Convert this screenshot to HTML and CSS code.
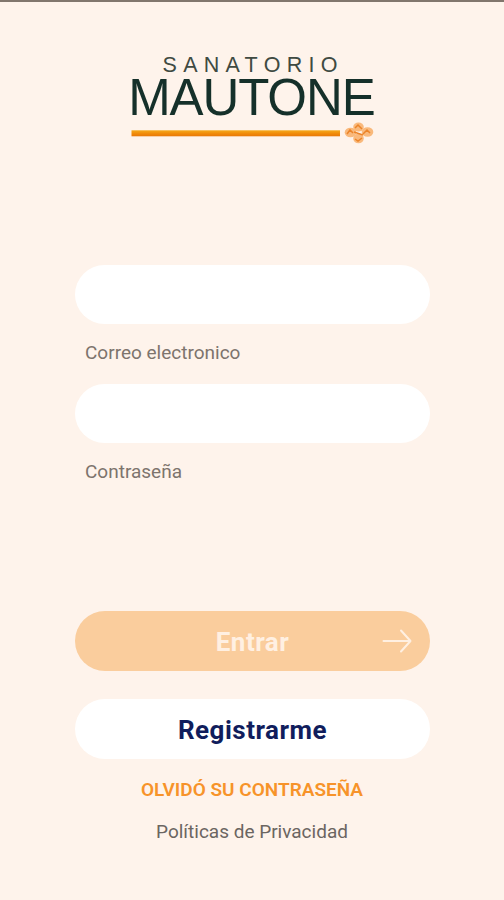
FILE: index.html
```html
<!DOCTYPE html>
<html lang="es">
<head>
    <meta charset="UTF-8">
    <title>Sanatorio Mautone</title>
    <link rel="stylesheet" href="styles.css">
</head>
<body>
    <header>
        <svg class="logo" width="250" height="96" viewBox="128 52 250 96">
            <defs>
                <linearGradient id="bar" x1="0" y1="0" x2="0" y2="1">
                    <stop offset="0" stop-color="#f5a91c"/>
                    <stop offset="0.55" stop-color="#f08a0a"/>
                    <stop offset="1" stop-color="#e87808"/>
                </linearGradient>
            </defs>
            <text class="logo-small" x="162.5" y="71.6" textLength="175" lengthAdjust="spacing">SANATORIO</text>
            <text class="logo-big" x="128.2" y="115" textLength="247.5" lengthAdjust="spacing">MAUTONE</text>
            <rect x="131.5" y="130.3" width="208.5" height="6" fill="url(#bar)"/>
            <g class="flower">
                <ellipse cx="350.5" cy="132.5" rx="5.8" ry="4.8"/>
                <ellipse cx="367.5" cy="132" rx="5.8" ry="4.8"/>
                <ellipse cx="358.5" cy="127" rx="5.3" ry="4.5"/>
                <ellipse cx="358.5" cy="138.5" rx="5.3" ry="4.8"/>
            </g>
            <g class="flower-lines">
                <path d="M347 134l3-4 3 3M363 134l4-4 3 3"/>
                <path d="M355 128l3-3 4 4M355 139l3 2 4-3M354 132l9 3"/>
            </g>
        </svg>
    </header>

    <form class="login">
        <div class="field">
            <input type="text" id="email">
            <label for="email">Correo electronico</label>
        </div>
        <div class="field">
            <input type="password" id="password">
            <label for="password">Contraseña</label>
        </div>

        <button type="button" class="btn btn-enter">
            <span>Entrar</span>
            <svg class="arrow" width="32" height="26" viewBox="0 0 32 26">
                <path d="M2.5 13h27M20 2.5L29.5 13 20 23.5"/>
            </svg>
        </button>
        <button type="button" class="btn btn-register"><span>Registrarme</span></button>
    </form>

    <nav class="links">
        <a href="#" class="forgot">OLVIDÓ SU CONTRASEÑA</a>
        <a href="#" class="privacy">Políticas de Privacidad</a>
    </nav>
</body>
</html>
```

FILE: styles.css
```css
* {
    box-sizing: border-box;
    margin: 0;
    padding: 0;
}
body {
    height: 900px;
    background-color: #fef3eb;
    border-top: 2px solid #81766d;
    font-family: Roboto, sans-serif;
    overflow: hidden;
}
header {
    height: 263px;
    padding: 50px 0 0 128px;
}
.logo {
    display: block;
}
.logo text {
    font-family: "Liberation Sans", Arial, sans-serif;
}
.logo-small {
    font-size: 21.5px;
    fill: #3f4a42;
}
.logo-big {
    font-size: 51px;
    fill: #15302a;
}
.flower {
    fill: #f9b97c;
}
.flower-lines {
    fill: none;
    stroke: #ec8429;
    stroke-width: 1.5;
}
.login {
    width: 355px;
    margin-left: 75px;
}
.field {
    height: 119px;
}
.field input {
    display: block;
    width: 100%;
    height: 59px;
    border: none;
    border-radius: 30px;
    background-color: #ffffff;
    padding: 0 24px;
    font-size: 19px;
}
.field label {
    display: block;
    margin: 18px 0 0 10px;
    font-size: 19px;
    line-height: 22px;
    color: #7d746d;
}
.btn {
    display: flex;
    align-items: center;
    justify-content: center;
    position: relative;
    width: 100%;
    height: 60px;
    border: none;
    border-radius: 30px;
    padding-top: 1px;
    font-family: inherit;
    font-size: 26px;
    font-weight: 700;
    letter-spacing: 0.5px;
    cursor: pointer;
}
.btn-enter {
    margin-top: 108px;
    background-color: #facd9d;
    color: #fff0e2;
}
.arrow {
    position: absolute;
    right: 17px;
    top: 17px;
    fill: none;
    stroke: #fff0e2;
    stroke-width: 2;
    stroke-linecap: round;
    stroke-linejoin: round;
}
.btn-register {
    margin-top: 28px;
    background-color: #ffffff;
    color: #101d5c;
}
.links {
    display: flex;
    flex-direction: column;
    align-items: center;
    margin-top: 20px;
}
.links a {
    font-size: 19px;
    line-height: 22px;
    text-decoration: none;
}
.forgot {
    font-weight: 600;
    color: #f7932a;
}
.links .privacy {
    margin-top: 20px;
    color: #6b6561;
}
```
